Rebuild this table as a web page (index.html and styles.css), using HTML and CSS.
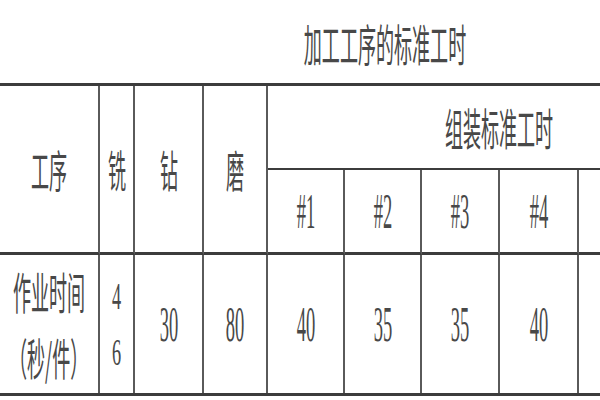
FILE: index.html
```html
<!DOCTYPE html>
<html lang="zh-CN">
<head>
<meta charset="utf-8">
<title>加工工序的标准工时</title>
<link rel="stylesheet" href="styles.css">
</head>
<body>
<div class="sheet">
  <div class="title"><span class="cjk">加工工序的标准工时</span></div>
  <div class="grid">
    <div class="cell head tall"><span class="cjk">工序</span></div>
    <div class="cell head tall"><span class="cjk">铣</span></div>
    <div class="cell head tall"><span class="cjk">钻</span></div>
    <div class="cell head tall"><span class="cjk">磨</span></div>
    <div class="cell group"><span class="cjk">组装标准工时</span></div>
    <div class="cell head"><span class="num">#1</span></div>
    <div class="cell head"><span class="num">#2</span></div>
    <div class="cell head"><span class="num">#3</span></div>
    <div class="cell head"><span class="num">#4</span></div>
    <div class="cell head"></div>
    <div class="cell head end"></div>
    <div class="cell"><span class="cjk line">作业时间</span><span class="cjk line">（秒/件）</span></div>
    <div class="cell"><span class="small">4</span><span class="small">6</span></div>
    <div class="cell"><span class="num">30</span></div>
    <div class="cell"><span class="num">80</span></div>
    <div class="cell"><span class="num">40</span></div>
    <div class="cell"><span class="num">35</span></div>
    <div class="cell"><span class="num">35</span></div>
    <div class="cell"><span class="num">40</span></div>
    <div class="cell"></div>
    <div class="cell end"></div>
  </div>
</div>
</body>
</html>
```
FILE: styles.css
```css
html, body {
  margin: 0;
  padding: 0;
  background: #ffffff;
}

body {
  width: 600px;
  height: 400px;
  overflow: hidden;
  font-family: "Liberation Serif", "Noto Sans CJK SC", serif;
  color: #484848;
}

.sheet {
  width: 769px;
}

.title {
  height: 83px;
  display: flex;
  justify-content: center;
  align-items: center;
  padding-top: 2px;
  box-sizing: border-box;
}

.grid {
  display: grid;
  grid-template-columns: 100px 35px 69px 64px 77px 77px 78px 79px 79px 72px;
  grid-template-rows: 84px 85px 138px;
  border-top: 3px solid #3c3c3c;
  border-bottom: 3px solid #3c3c3c;
  width: 100%;
  box-sizing: border-box;
}

.cell {
  box-sizing: border-box;
  border-right: 2px solid #5a5a5a;
  display: flex;
  flex-direction: column;
  align-items: center;
  justify-content: center;
  min-width: 0;
}

.cell.end {
  border-right: none;
}

.head {
  border-bottom: 3px solid #3c3c3c;
}

.tall {
  grid-row: 1 / 3;
}

.group {
  grid-column: 5 / 11;
  border-right: none;
  border-bottom: 2px solid #3c3c3c;
}

.cjk, .num, .small {
  display: block;
  flex-shrink: 0;
  white-space: nowrap;
  line-height: 1;
}

.cjk {
  font-family: "Noto Sans CJK SC", sans-serif;
  font-size: 44px;
  transform: scaleX(0.41);
}

.cjk.line {
  height: 66px;
  line-height: 66px;
}

.num {
  font-size: 50px;
  transform: scaleX(0.37);
}

.small {
  font-size: 38px;
  height: 56px;
  line-height: 56px;
  transform: scaleX(0.48);
}
```
